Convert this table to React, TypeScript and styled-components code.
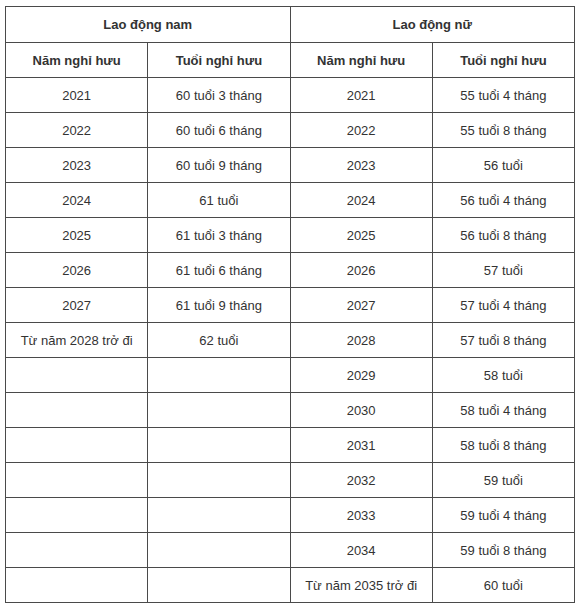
import React from 'react';
import styled, { createGlobalStyle } from 'styled-components';

const GlobalStyle = createGlobalStyle`
  html, body {
    margin: 0;
    padding: 0;
    background: #fff;
  }
  body {
    font-family: 'Liberation Sans', Arial, sans-serif;
  }
`;

const Page = styled.div`
  padding: 6px 5px 0 5px;
`;

const Table = styled.table`
  width: 570px;
  border-collapse: collapse;
  table-layout: fixed;
  color: #333;
  font-size: 13px;
`;

const Cell = styled.td<{ $head?: boolean; $h?: number }>`
  border: 1px solid #4a4a4a;
  text-align: center;
  vertical-align: middle;
  height: ${(p) => p.$h ?? 34}px;
  padding: 0;
  font-weight: ${(p) => (p.$head ? 700 : 400)};
  white-space: nowrap;
`;

const male: [string, string][] = [
  ['2021', '60 tuổi 3 tháng'],
  ['2022', '60 tuổi 6 tháng'],
  ['2023', '60 tuổi 9 tháng'],
  ['2024', '61 tuổi'],
  ['2025', '61 tuổi 3 tháng'],
  ['2026', '61 tuổi 6 tháng'],
  ['2027', '61 tuổi 9 tháng'],
  ['Từ năm 2028 trở đi', '62 tuổi'],
];

const female: [string, string][] = [
  ['2021', '55 tuổi 4 tháng'],
  ['2022', '55 tuổi 8 tháng'],
  ['2023', '56 tuổi'],
  ['2024', '56 tuổi 4 tháng'],
  ['2025', '56 tuổi 8 tháng'],
  ['2026', '57 tuổi'],
  ['2027', '57 tuổi 4 tháng'],
  ['2028', '57 tuổi 8 tháng'],
  ['2029', '58 tuổi'],
  ['2030', '58 tuổi 4 tháng'],
  ['2031', '58 tuổi 8 tháng'],
  ['2032', '59 tuổi'],
  ['2033', '59 tuổi 4 tháng'],
  ['2034', '59 tuổi 8 tháng'],
  ['Từ năm 2035 trở đi', '60 tuổi'],
];

const App: React.FC = () => {
  return (
    <Page>
      <GlobalStyle />
      <Table>
        <tbody>
          <tr>
            <Cell $head $h={35} colSpan={2}>
              Lao động nam
            </Cell>
            <Cell $head $h={35} colSpan={2}>
              Lao động nữ
            </Cell>
          </tr>
          <tr>
            <Cell $head>Năm nghỉ hưu</Cell>
            <Cell $head>Tuổi nghỉ hưu</Cell>
            <Cell $head>Năm nghỉ hưu</Cell>
            <Cell $head>Tuổi nghỉ hưu</Cell>
          </tr>
          {female.map((f, i) => {
            const m = male[i];
            return (
              <tr key={f[0]}>
                <Cell>{m ? m[0] : ''}</Cell>
                <Cell>{m ? m[1] : ''}</Cell>
                <Cell>{f[0]}</Cell>
                <Cell>{f[1]}</Cell>
              </tr>
            );
          })}
        </tbody>
      </Table>
    </Page>
  );
};

export default App;
